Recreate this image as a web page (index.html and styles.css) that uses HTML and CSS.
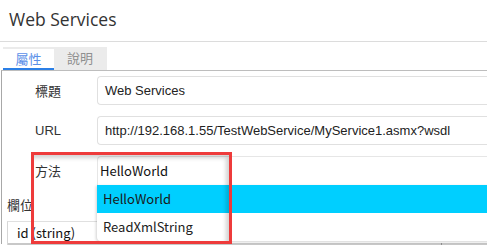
FILE: index.html
```html
<!DOCTYPE html>
<html>
<head>
<meta charset="utf-8">
<link rel="stylesheet" href="styles.css">
</head>
<body>
<div class="page">
  <header class="title-bar"><h1 class="title">Web Services</h1></header>
  <nav class="tabs">
    <div class="tab tab-active">屬性</div>
    <div class="tab">說明</div>
  </nav>
  <section class="panel">
    <div class="form">
      <div class="row">
        <label class="label">標題</label>
        <div class="input">Web Services</div>
      </div>
      <div class="row">
        <label class="label label-latin">URL</label>
        <div class="input">http://192.168.1.55/TestWebService/MyService1.asmx?wsdl</div>
      </div>
      <div class="row row-select">
        <label class="label">方法</label>
        <div class="select">HelloWorld
          <ul class="dropdown">
            <li class="option option-active">HelloWorld</li>
            <li class="option">ReadXmlString</li>
          </ul>
        </div>
      </div>
    </div>
    <div class="fields-label">欄位</div>
    <div class="table">
      <div class="table-head">id (string)</div>
      <div class="table-row"><span class="cell cell-main"></span><span class="cell"></span></div>
    </div>
    <div class="annotation"></div>
  </section>
</div>
</body>
</html>
```
FILE: styles.css
```css
* { box-sizing: border-box; }
html, body { margin: 0; padding: 0; }
body {
  width: 487px;
  height: 245px;
  overflow: hidden;
  background: #fff;
  font-family: "Liberation Sans", Arial, sans-serif;
  color: #222;
}
.page { position: relative; width: 487px; height: 245px; overflow: hidden; }
.title-bar {
  height: 42px;
  border-bottom: 1px solid #dcdcdc;
  padding-left: 9px;
}
.title {
  margin: 0;
  font-family: "Open Sans", "Noto Sans", sans-serif;
  font-weight: 400;
  font-size: 17.5px;
  line-height: 38px;
  color: #333;
}
.tabs {
  display: flex;
  margin: 5px 0 0 3px;
  height: 23px;
  background: #ebebeb;
  width: 104px;
}
.tab {
  width: 52px;
  text-align: center;
  font-family: "Noto Sans CJK TC", sans-serif;
  font-size: 13px;
  line-height: 22px;
  color: #8f8f8f;
}
.tab-active {
  width: 51px;
  background: #fff;
  margin-top: 2px;
  line-height: 19px;
  color: #5b8fe8;
  border-bottom: 2px solid #2b7fe6;
}
.panel {
  position: relative;
  margin-left: 1px;
  border-top: 1px solid #bdbdbd;
  border-left: 1px solid #a8a8a8;
  height: 174px;
}
.form {
  display: flex;
  flex-direction: column;
  gap: 11px;
  padding-top: 5px;
}
.row {
  display: flex;
  align-items: center;
  height: 29px;
}
.label {
  flex: none;
  width: 95px;
  padding-left: 33px;
  font-size: 13px;
  color: #333;
  font-family: "Noto Sans CJK TC", "Liberation Sans", sans-serif;
}
.label-latin { font-family: "Liberation Sans", Arial, sans-serif; }
.input {
  width: 420px;
  height: 29px;
  flex: none;
  border: 1px solid #e0e0e0;
  border-right: none;
  border-radius: 4px 0 0 4px;
  padding-left: 7px;
  font-size: 13px;
  line-height: 27px;
  color: #222;
  white-space: nowrap;
}
.select {
  position: relative;
  width: 420px;
  height: 29px;
  flex: none;
  border: 1px solid #e6e6e6;
  border-right: none;
  border-bottom: none;
  border-radius: 4px 0 0 0;
  padding-left: 2px;
  font-family: "Noto Sans CJK TC", sans-serif;
  font-size: 13px;
  line-height: 28px;
  color: #111;
}
.dropdown {
  position: absolute;
  left: -1px;
  top: 28px;
  width: 421px;
  margin: 0;
  padding: 0;
  list-style: none;
  background: #fff;
  border-radius: 0 0 0 4px;
  box-shadow: -1px 1px 3px rgba(0,0,0,0.18);
  z-index: 2;
}
.option {
  height: 28px;
  line-height: 28px;
  padding-left: 6px;
  font-family: "Noto Sans CJK TC", sans-serif;
  font-size: 13px;
  color: #222;
}
.option-active { background: #00cfff; color: #1a1a1a; }
.fields-label {
  margin: 10px 0 0 5px;
  font-family: "Noto Sans CJK TC", sans-serif;
  font-size: 13px;
  line-height: 20px;
  color: #333;
}
.table {
  margin: 6px 0 0 5px;
  border-top: 1px solid #e0e0e0;
  border-left: 1px solid #d6d6d6;
}
.table-head {
  height: 21px;
  padding-left: 9px;
  font-family: "Noto Sans CJK TC", sans-serif;
  font-size: 13px;
  line-height: 22px;
  color: #111;
}
.table-row {
  display: flex;
  height: 10px;
  background: #c8c8c8;
}
.cell-main { width: 434px; border-right: 1px solid #8f8f8f; }
.annotation {
  position: absolute;
  left: 29px;
  top: 81px;
  width: 201px;
  height: 92px;
  border: 3px solid #ee3b3b;
  box-shadow: inset -3px 3px 4px rgba(0,0,0,0.18);
  z-index: 3;
  pointer-events: none;
}
```
